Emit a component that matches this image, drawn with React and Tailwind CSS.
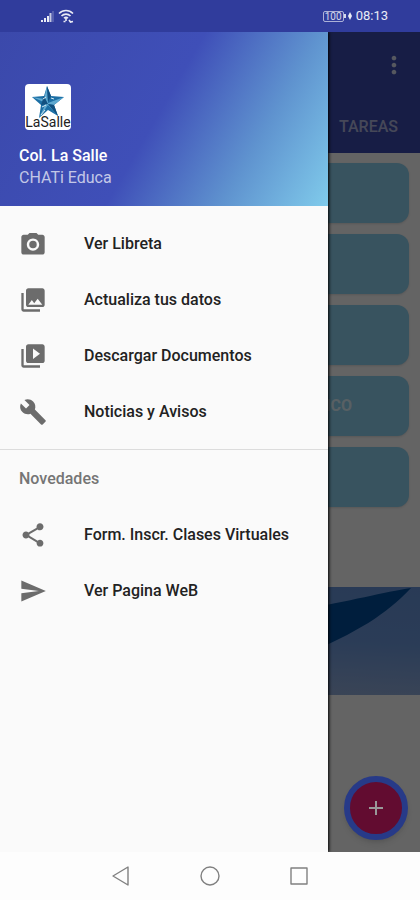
import {
  MdPhotoLibrary,
  MdVideoLibrary,
  MdBuild,
  MdShare,
  MdSend,
  MdMoreVert,
  MdAdd,
} from 'react-icons/md';

const mainItems = [
  { label: 'Ver Libreta', icon: CameraIcon },
  { label: 'Actualiza tus datos', icon: MdPhotoLibrary },
  { label: 'Descargar Documentos', icon: MdVideoLibrary },
  { label: 'Noticias y Avisos', icon: MdBuild },
];

const newsItems = [
  { label: 'Form. Inscr. Clases Virtuales', icon: MdShare },
  { label: 'Ver Pagina WeB', icon: MdSend },
];

const cards = ['', '', '', 'ACADÉMICO', ''];

// Square-cornered camera with an open ring lens
function CameraIcon({ className }) {
  return (
    <svg className={className} viewBox="0 0 24 24" fill="currentColor">
      <path d="M9 2.500L7.500 4H4c-1.100 0-2 .9-2 2v13c0 1.100.9 2 2 2h16c1.100 0 2-.9 2-2V6c0-1.100-.9-2-2-2h-3.500L15 2.500H9zm3 15.300c-2.900 0-5.300-2.400-5.300-5.300s2.400-5.300 5.300-5.300 5.300 2.400 5.300 5.300-2.400 5.300-5.300 5.300z" />
      <circle cx="12" cy="12.500" r="3.200" />
    </svg>
  );
}

function StatusBar() {
  return (
    <div className="flex h-8 items-center justify-between bg-[#303c9c] pr-8 pl-10 text-white/90">
      <div className="flex items-center gap-0.5">
        <svg className="h-4 w-4" viewBox="0 0 16 16" fill="currentColor">
          <path d="M1 12h2v2H1zM4 10h2v4H4zM7 8h2v6H7z" />
          <path d="M9.500 5h2v9h-2z" opacity="0.8" />
          <path d="M12.500 3h1v11h-1z" opacity="0.4" />
        </svg>
        <svg className="h-4 w-4" viewBox="0 0 16 16" fill="none" stroke="currentColor" strokeWidth="1.6">
          <path d="M1 5.500C5 1.500 11 1.500 15 5.500M3.500 8c2.500-2.500 6.500-2.500 9 0M6 10.300c1.200-1.200 2.800-1.200 4 0" />
          <path d="M8 10v3M5.500 13.500h2M11 12l1.500 2 2.500-.5" />
        </svg>
      </div>
      <div className="flex items-center gap-0.5">
        <div className="flex items-center text-white/80">
          <span className="rounded-xs border border-white/60 px-px text-[10px] leading-[9px]">100</span>
          <span className="h-1 w-0.5 bg-white/80" />
        </div>
        <svg className="mr-0.5 h-2 w-1" viewBox="0 0 4 8" fill="currentColor">
          <path d="M2 0l2 4-2 4-2-4z" />
        </svg>
        <span className="text-[13px]">08:13</span>
      </div>
    </div>
  );
}

function NavItem({ item }) {
  const Icon = item.icon;
  return (
    <li>
      <a href="#" className="flex h-14 items-center gap-[37px] pl-[19px] text-base font-medium text-[#222]">
        <Icon className="h-7 w-7 shrink-0 text-[#6c6c6c]" />
        {item.label}
      </a>
    </li>
  );
}

function Logo() {
  return (
    <div className="flex h-[46px] w-[46px] flex-col items-center overflow-hidden rounded-sm bg-white">
      <svg className="mt-px h-[34px] w-[34px] shrink-0" viewBox="0 0 34 34">
        <path d="M16 1l4 10 13 1-10 8 4 11-10-6-9 8 2-13L1 12l12-1z" fill="#1c6fa5" />
        <path d="M16 1l1 17 16-6-10 8-6-1 10 12-10-11-9 13 7-15L1 12l12 2z" fill="#5fa9d0" />
        <path d="M13 11l4 8-7 1zM17 19l6 1 4 11zM16 1l4 10-3 6z" fill="#12507f" />
        <path d="M12 14l3-2M11 22l4-2M20 13l3 1M14 25l-4 5" stroke="#d8ecf5" strokeWidth="1" />
      </svg>
      <span className="-mt-1 text-[14px] leading-[15px] text-[#222]">LaSalle</span>
    </div>
  );
}

function Drawer() {
  return (
    <aside className="absolute inset-y-0 left-0 w-[78%] bg-[#fafafa] shadow-[1px_0_3px_#000]">
      <header className="flex h-[174px] flex-col justify-end bg-linear-[120deg,#3b49ab_0%,#3f4fb8_48%,#5f93cf_75%,#80cbeb_100%] pb-[18px] pl-[19px] text-base text-white">
        <div className="mb-3.5 ml-1.5">
          <Logo />
        </div>
        <h1 className="leading-6 font-medium">Col. La Salle</h1>
        <p className="leading-5 text-white/70">CHATi Educa</p>
      </header>
      <nav>
        <ul className="border-b border-[#dcdcdc] pt-2.5 pb-[9px]">
          {mainItems.map((item) => (
            <NavItem key={item.label} item={item} />
          ))}
        </ul>
        <h2 className="flex h-[57px] items-center pl-[19px] text-base font-medium text-[#757575]">Novedades</h2>
        <ul>
          {newsItems.map((item) => (
            <NavItem key={item.label} item={item} />
          ))}
        </ul>
      </nav>
    </aside>
  );
}

function HomePage() {
  return (
    <div className="bg-[#fafafa]">
      <header className="flex h-[121px] flex-col items-end justify-between bg-[#3a4aac] pt-[19px] text-white">
        <button type="button" aria-label="Menú" className="mr-3 text-white/80">
          <MdMoreVert className="h-7 w-7" />
        </button>
        <button type="button" className="mr-[22px] mb-3.5 text-base font-medium text-white/60">TAREAS</button>
      </header>
      <div className="flex flex-col gap-[11px] px-[11px] pt-2.5">
        {cards.map((text, i) => (
          <button
            key={i}
            type="button"
            className="h-[60px] rounded-xl bg-[#8ccfed] pr-[57px] text-right text-base font-bold text-white/70 shadow"
          >
            {text}
          </button>
        ))}
      </div>
      <svg className="mt-20 h-[108px] w-full" viewBox="0 0 420 108" preserveAspectRatio="none">
        <defs>
          <linearGradient id="sky" x1="0.75" y1="1" x2="0.95" y2="0">
            <stop offset="0" stopColor="#92acd8" />
            <stop offset="0.5" stopColor="#6b97da" />
            <stop offset="1" stopColor="#6792d6" />
          </linearGradient>
        </defs>
        <rect width="420" height="108" fill="url(#sky)" />
        <path d="M300 23C350 14 385 5 411 1C385 28 360 44 300 70z" fill="#004c98" />
      </svg>
    </div>
  );
}

export default function App() {
  return (
    <div className="flex min-h-screen flex-col bg-[#fdfdfd] font-['Roboto',sans-serif]">
      <StatusBar />
      <main className="relative flex-1 overflow-hidden bg-[#fafafa]">
        <HomePage />
        <div className="absolute inset-0 bg-black/60" />
        <button
          type="button"
          aria-label="Agregar"
          className="absolute right-3 bottom-3 flex h-16 w-16 items-center justify-center rounded-full border-[6px] border-[#273a88] bg-[#620c30] text-[#999] shadow-md"
        >
          <MdAdd className="h-6 w-6" />
        </button>
        <Drawer />
      </main>
      <footer className="flex h-12 items-center justify-center gap-[67px] text-[#808080]">
        <button type="button" aria-label="Atrás">
          <svg className="h-[22px] w-[22px]" viewBox="0 0 22 22" fill="none" stroke="currentColor" strokeWidth="1.4" strokeLinejoin="round">
            <path d="M3 11L18 2v18z" />
          </svg>
        </button>
        <button type="button" aria-label="Inicio">
          <svg className="h-[22px] w-[22px]" viewBox="0 0 22 22" fill="none" stroke="currentColor" strokeWidth="1.4">
            <circle cx="11" cy="11" r="9" />
          </svg>
        </button>
        <button type="button" aria-label="Recientes">
          <svg className="h-[22px] w-[22px]" viewBox="0 0 22 22" fill="none" stroke="currentColor" strokeWidth="1.4" strokeLinejoin="round">
            <path d="M3 3h16v16H3z" />
          </svg>
        </button>
      </footer>
    </div>
  );
}
